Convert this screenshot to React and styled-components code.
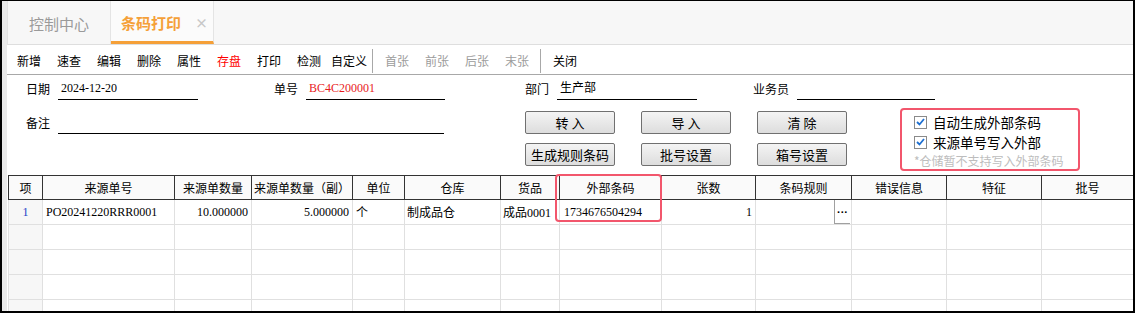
import React from "react";
import styled, { createGlobalStyle } from "styled-components";

const GlobalStyle = createGlobalStyle`
  html, body {
    margin: 0;
    padding: 0;
    background: #fff;
  }
  body {
    font-family: "Liberation Serif", "Noto Sans CJK SC", serif;
    font-size: 12px;
    color: #000;
  }
`;

const Frame = styled.div`
  width: 1135px;
  height: 313px;
  box-sizing: border-box;
  border: solid #000;
  border-width: 1px 2px 2px 2px;
  background: #e9e9e9;
  padding-left: 5px;
  overflow: hidden;
`;

const Page = styled.div`
  background: #fff;
  height: 100%;
  display: flex;
  flex-direction: column;
  & > * {
    flex-shrink: 0;
  }
`;

const TabBar = styled.div`
  height: 44px;
  box-sizing: border-box;
  display: flex;
  background: #f7f7f7;
  border-bottom: 1px solid #dedede;
  border-left: 1px solid #e2e2e2;
`;

const Tab = styled.div`
  width: 103px;
  box-sizing: border-box;
  display: flex;
  align-items: center;
  font-family: "Noto Sans CJK SC", sans-serif;
  font-size: 15px;
  border-right: 1px solid #e4e4e4;
  color: ${(p) => (p.$active ? "#f5a038" : "#9a9a9a")};
  font-weight: ${(p) => (p.$active ? "bold" : "normal")};
  justify-content: ${(p) => (p.$active ? "space-between" : "center")};
  padding: ${(p) => (p.$active ? "3px 5px 0 10px" : "2px 0 0")};
  border-bottom: ${(p) => (p.$active ? "3px solid #f5a038" : "none")};
  background: ${(p) => (p.$active ? "#fbfbfb" : "transparent")};
`;

const Close = styled.span`
  color: #c8c8c8;
  font-size: 13px;
  font-weight: bold;
`;

const Toolbar = styled.div`
  height: 30px;
  box-sizing: border-box;
  display: flex;
  align-items: center;
  padding: 2px 0 0 2px;
  border-bottom: 1px solid #a8a8a8;
`;

const ToolItem = styled.div`
  width: 40px;
  text-align: center;
  font-family: "Noto Sans CJK SC", sans-serif;
  font-size: 12px;
  color: ${(p) => p.$color || "#000"};
`;

const ToolSep = styled.div`
  width: 1px;
  height: 24px;
  background: #a8a8a8;
  margin: 0 4px 0 3px;
`;

const Form = styled.div`
  height: 100px;
  box-sizing: border-box;
  padding-left: 19px;
  display: flex;
  flex-direction: column;
`;

const FieldRow = styled.div`
  display: flex;
  padding-top: 3px;
`;

const FieldGroup = styled.div`
  display: flex;
  align-items: center;
  gap: 8px;
  margin-left: ${(p) => p.$ml || 0}px;
  margin-top: ${(p) => p.$mt || 0}px;
`;

const Label = styled.span`
  font-family: "Noto Sans CJK SC", sans-serif;
  font-size: 12px;
  line-height: 22px;
`;

const Line = styled.div`
  width: ${(p) => p.$w}px;
  height: 22px;
  box-sizing: border-box;
  border-bottom: 1px solid #000;
  line-height: 21px;
  padding-left: 3px;
  font-size: 12px;
  color: ${(p) => p.$color || "#000"};
`;

const Lower = styled.div`
  display: flex;
  align-items: flex-start;
`;

const ButtonGrid = styled.div`
  margin: 11px 0 0 81px;
  display: grid;
  grid-template-columns: repeat(3, 90px);
  column-gap: 26px;
  row-gap: 9px;
`;

const Button = styled.button`
  height: 23px;
  padding: 0;
  box-sizing: border-box;
  border: 1px solid #707070;
  border-radius: 2px;
  background: linear-gradient(#f4f4f4, #dddddd);
  font-family: "Noto Sans CJK SC", sans-serif;
  font-size: 13px;
  color: #000;
  letter-spacing: ${(p) => (p.$spaced ? "3px" : "0")};
  text-indent: ${(p) => (p.$spaced ? "3px" : "0")};
`;

const CheckPanel = styled.div`
  margin: 8px 0 0 53px;
  width: 180px;
  box-sizing: border-box;
  border: 2px solid #f2566c;
  border-radius: 4px;
  padding: 2px 0 0 12px;
  font-family: "Noto Sans CJK SC", sans-serif;
`;

const CheckRow = styled.label`
  height: 20px;
  display: flex;
  align-items: center;
  gap: 6px;
  font-size: 13.5px;
`;

const CheckBox = styled.span`
  width: 11px;
  height: 11px;
  border: 1px solid #8a8a8a;
  background: #fff;
  display: flex;
  align-items: center;
  justify-content: center;
`;

const Hint = styled.div`
  height: 17px;
  line-height: 17px;
  font-size: 12px;
  color: #bdbdbd;
`;

const TableWrap = styled.div`
  position: relative;
  margin-left: 1px;
`;

const Grid = styled.table`
  width: 1125px;
  border-collapse: collapse;
  table-layout: fixed;
`;

const Th = styled.th`
  height: 23px;
  padding: 0;
  border: 1px solid #333;
  background: #fafafa;
  font-family: "Noto Sans CJK SC", sans-serif;
  font-size: 12px;
  font-weight: normal;
  white-space: nowrap;
  overflow: hidden;
`;

const Td = styled.td`
  height: 24px;
  padding: 0 3px 0 ${(p) => p.$pl ?? 3}px;
  border: 1px solid #e0e0e0;
  font-size: 12px;
  white-space: nowrap;
  overflow: hidden;
  text-align: ${(p) => p.$align || "left"};
  color: ${(p) => p.$color || "#000"};
  background: ${(p) => (p.$index ? "#f7f7f7" : "#fff")};
`;

const CellTools = styled.div`
  display: flex;
  justify-content: flex-end;
  height: 24px;
`;

const MoreButton = styled.span`
  width: 16px;
  height: 24px;
  box-sizing: border-box;
  border-left: 1px solid #a0a0a0;
  border-bottom: 1px solid #a0a0a0;
  font-weight: bold;
  font-family: "Liberation Sans", sans-serif;
  font-size: 11px;
  line-height: 24px;
  text-align: center;
`;

const Highlight = styled.div`
  position: absolute;
  left: 547px;
  top: -1px;
  width: 107px;
  height: 48px;
  box-sizing: border-box;
  border: 2px solid #f2566c;
  border-radius: 4px;
  pointer-events: none;
`;

const tools = [
  { t: "新增" }, { t: "速查" }, { t: "编辑" }, { t: "删除" }, { t: "属性" },
  { t: "存盘", c: "#f00" }, { t: "打印" }, { t: "检测" }, { t: "自定义" },
  { sep: true },
  { t: "首张", c: "#9c9c9c" }, { t: "前张", c: "#9c9c9c" }, { t: "后张", c: "#9c9c9c" }, { t: "末张", c: "#9c9c9c" },
  { sep: true },
  { t: "关闭" },
];

const columns = [
  ["项", 34], ["来源单号", 132], ["来源单数量", 77], ["来源单数量（副）", 101],
  ["单位", 52], ["仓库", 96], ["货品", 59], ["外部条码", 102], ["张数", 94],
  ["条码规则", 96], ["错误信息", 95], ["特征", 95], ["批号", 92],
];

function Check({ children }) {
  return (
    <CheckRow>
      <CheckBox>
        <svg width="9" height="8" viewBox="0 0 9 8">
          <path d="M1 4 L3.5 6.5 L8 1" fill="none" stroke="#1e6fd0" strokeWidth="1.8" />
        </svg>
      </CheckBox>
      {children}
    </CheckRow>
  );
}

export default function App() {
  return (
    <>
      <GlobalStyle />
      <Frame>
        <Page>
          <TabBar>
            <Tab>控制中心</Tab>
            <Tab $active>
              条码打印<Close>×</Close>
            </Tab>
          </TabBar>

          <Toolbar>
            {tools.map((item, i) =>
              item.sep ? <ToolSep key={i} /> : <ToolItem key={i} $color={item.c}>{item.t}</ToolItem>
            )}
          </Toolbar>

          <Form>
            <FieldRow>
              <FieldGroup>
                <Label>日期</Label>
                <Line $w={140}>2024-12-20</Line>
              </FieldGroup>
              <FieldGroup $ml={76}>
                <Label>单号</Label>
                <Line $w={139} $color="#e81c1c">BC4C200001</Line>
              </FieldGroup>
              <FieldGroup $ml={80}>
                <Label>部门</Label>
                <Line $w={140}>生产部</Line>
              </FieldGroup>
              <FieldGroup $ml={56}>
                <Label>业务员</Label>
                <Line $w={138} />
              </FieldGroup>
            </FieldRow>
            <Lower>
              <FieldGroup $mt={12}>
                <Label>备注</Label>
                <Line $w={386} />
              </FieldGroup>
              <ButtonGrid>
                <Button $spaced>转入</Button>
                <Button $spaced>导入</Button>
                <Button $spaced>清除</Button>
                <Button>生成规则条码</Button>
                <Button>批号设置</Button>
                <Button>箱号设置</Button>
              </ButtonGrid>
              <CheckPanel>
                <Check>自动生成外部条码</Check>
                <Check>来源单号写入外部</Check>
                <Hint>*仓储暂不支持写入外部条码</Hint>
              </CheckPanel>
            </Lower>
          </Form>

          <TableWrap>
            <Grid>
              <colgroup>
                {columns.map(([name, w]) => (
                  <col key={name} style={{ width: w }} />
                ))}
              </colgroup>
              <thead>
                <tr>
                  {columns.map(([name]) => (
                    <Th key={name}>{name}</Th>
                  ))}
                </tr>
              </thead>
              <tbody>
                <tr>
                  <Td $index $align="center" $color="#1c3fc8">1</Td>
                  <Td>PO20241220RRR0001</Td>
                  <Td $align="right">10.000000</Td>
                  <Td $align="right">5.000000</Td>
                  <Td>个</Td>
                  <Td $pl={2}>制成品仓</Td>
                  <Td $pl={2}>成品0001</Td>
                  <Td $pl={4}>1734676504294</Td>
                  <Td $align="right">1</Td>
                  <Td $pl={0} style={{ paddingRight: 1 }}>
                    <CellTools>
                      <MoreButton>···</MoreButton>
                    </CellTools>
                  </Td>
                  <Td />
                  <Td />
                  <Td />
                </tr>
                {[0, 1, 2, 3].map((r) => (
                  <tr key={r}>
                    {columns.map(([name], c) => (
                      <Td key={name} $index={c === 0} />
                    ))}
                  </tr>
                ))}
              </tbody>
            </Grid>
            <Highlight />
          </TableWrap>
        </Page>
      </Frame>
    </>
  );
}
